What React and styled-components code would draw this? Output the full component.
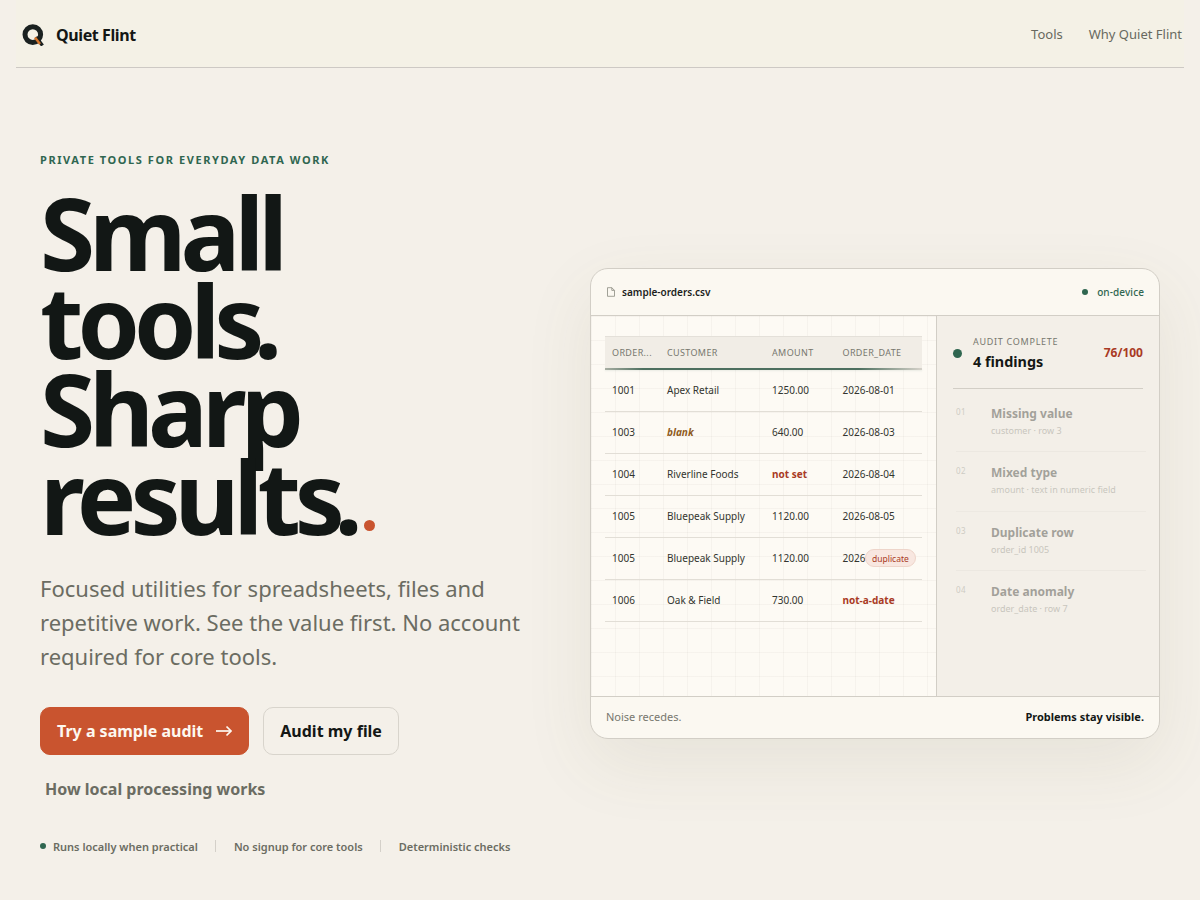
import React from "react";
import styled, { createGlobalStyle } from "styled-components";

const Global = createGlobalStyle`
  html, body { margin: 0; padding: 0; background: #f4f0e9; }
  body { font-family: "Noto Sans", sans-serif; color: #141715; overflow: hidden; }
  * { box-sizing: border-box; }
`;

const Page = styled.div`
  width: 1200px;
  height: 900px;
  overflow: hidden;
  background: #f4f0e9;
`;

const Header = styled.header`
  height: 68px;
  margin: 0 16px;
  padding: 0 2px 0 6px;
  display: flex;
  align-items: center;
  justify-content: space-between;
  border-bottom: 1px solid #cdc9c4;
  background: #f4f1e6;
`;

const Brand = styled.div`
  display: flex;
  align-items: center;
  gap: 12px;
  padding-top: 2px;
  font-size: 16px;
  font-weight: 700;
  letter-spacing: -0.025em;
`;

const Nav = styled.nav`
  display: flex;
  gap: 26px;
  font-size: 13px;
  color: #68695f;
`;

const Hero = styled.main`
  display: flex;
  justify-content: space-between;
  align-items: center;
  padding: 84px 40px 0;
`;

const Left = styled.section`
  width: 500px;
  flex: none;
`;

const Eyebrow = styled.div`
  font-size: 11px;
  line-height: 16px;
  font-weight: 700;
  letter-spacing: 0.143em;
  color: #2f6650;
`;

const Title = styled.h1`
  margin: 20px 0 0;
  font-size: 100px;
  line-height: 88px;
  font-weight: 700;
  letter-spacing: -0.06em;
  color: #121715;
`;

const TitleLine = styled.span`
  display: block;
`;

const Period = styled.span`
  margin-left: -4.5px;
`;

const AccentDot = styled.span`
  display: inline-block;
  width: 11px;
  height: 11px;
  margin-left: 7px;
  vertical-align: 4px;
  border-radius: 50%;
  background: #c9542f;
`;

const Lead = styled.p`
  margin: 31px 0 0;
  width: 490px;
  font-size: 22px;
  line-height: 34.1px;
  color: #6b6c62;
`;

const Actions = styled.div`
  display: flex;
  gap: 14px;
  margin-top: 34px;
`;

const Button = styled.div`
  height: 48px;
  display: flex;
  align-items: center;
  gap: 13px;
  padding: 0 16px;
  border-radius: 10px;
  font-size: 16px;
  font-weight: 700;
  background: ${(p) => (p.$primary ? "#c9542f" : "transparent")};
  color: ${(p) => (p.$primary ? "#fdf8f0" : "#141715")};
  border: 1px solid ${(p) => (p.$primary ? "#c9542f" : "#d8d4cc")};
`;

const TextLink = styled.div`
  margin: 22px 0 0 5px;
  font-size: 16px;
  line-height: 24px;
  font-weight: 700;
  color: #6b6c62;
`;

const Trust = styled.ul`
  list-style: none;
  margin: 39px 0 0;
  padding: 0;
  display: flex;
  align-items: center;
  font-size: 11px;
  font-weight: 600;
  color: #6b6c62;
`;

const TrustItem = styled.li`
  display: flex;
  align-items: center;
  height: 12px;
  padding: 0 17px 0 ${(p) => (p.$first ? "0" : "18px")};
  border-right: ${(p) => (p.$last ? "none" : "1px solid #d4d0c9")};
`;

const Dot = styled.span`
  display: block;
  flex: none;
  width: ${(p) => p.$size || 6}px;
  height: ${(p) => p.$size || 6}px;
  margin-right: ${(p) => p.$gap ?? 7}px;
  border-radius: 50%;
  background: #2f6650;
`;

const Card = styled.section`
  width: 570px;
  height: 471px;
  margin-top: 2px;
  flex: none;
  display: flex;
  flex-direction: column;
  background: #fbf8f1;
  border: 1px solid #d2cec6;
  border-radius: 18px;
  overflow: hidden;
  box-shadow: 0 24px 70px rgba(100, 95, 60, 0.09);
`;

const CardTop = styled.div`
  height: 47px;
  flex: none;
  display: flex;
  align-items: center;
  justify-content: space-between;
  padding: 0 15px;
  border-bottom: 1px solid #d2cec6;
  font-size: 10px;
`;

const FileName = styled.div`
  display: flex;
  align-items: center;
  gap: 6px;
  font-weight: 600;
  color: #1c1e1c;
`;

const Status = styled.div`
  display: flex;
  align-items: center;
  font-weight: 500;
  letter-spacing: 0.01em;
  color: #2f6650;
`;

const CardBody = styled.div`
  flex: 1;
  min-height: 0;
  display: grid;
  grid-template-columns: 346px 1fr;
`;

const TablePane = styled.div`
  padding: 20px 14px 0;
  border-right: 1px solid #d2cec6;
  background-color: #fdfaf4;
  background-image:
    linear-gradient(rgba(120, 110, 90, 0.05) 1px, transparent 1px),
    linear-gradient(90deg, rgba(120, 110, 90, 0.05) 1px, transparent 1px);
  background-size: 24px 24px;
`;

const Row = styled.div`
  display: grid;
  grid-template-columns: 55px 105px 70.5px 1fr;
  align-items: center;
  height: 42px;
  padding-left: 7px;
  font-size: 10px;
  color: #33352f;
  border-bottom: 1px solid #e2ded6;
`;

const HeadRow = styled(Row)`
  position: relative;
  height: 34px;
  padding-bottom: 2px;
  font-size: 9px;
  letter-spacing: 0.04em;
  color: #77776e;
  background: #f1ede6;
  border-top: 1px solid #e4e0d9;
  border-bottom: none;

  &::after {
    content: "";
    position: absolute;
    left: 0;
    right: 0;
    bottom: 0;
    height: 1.5px;
    background: linear-gradient(90deg, #a8aea3, #4d6f5f 12%, #4d6f5f 80%, #d6d2ca);
    box-shadow: 0 1px 2px rgba(47, 102, 80, 0.1);
  }
`;

const Cell = styled.div`
  position: relative;
  white-space: nowrap;
  font-weight: ${(p) => (p.$flag ? 700 : 400)};
  font-style: ${(p) => (p.$amber ? "italic" : "normal")};
  color: ${(p) => (p.$amber ? "#8f5b1d" : p.$flag ? "#a93a24" : "inherit")};
`;

const Badge = styled.span`
  position: absolute;
  left: 22.5px;
  top: -2px;
  height: 18px;
  padding: 0 6px;
  display: flex;
  align-items: center;
  border: 1px solid #eed5ca;
  border-radius: 9px;
  background: #f8e7e0;
  color: #a93a24;
  font-size: 8.5px;
`;

const Side = styled.aside`
  padding: 20px 13px 0 16px;
  background: #f3efe8;
`;

const Summary = styled.div`
  display: flex;
  align-items: center;
  padding-bottom: 16px;
  border-bottom: 1px solid #d2cec6;
  margin: 0 3px 4px 0;
`;

const SummaryText = styled.div`
  flex: 1;
  padding-left: 1px;
`;

const SummaryLabel = styled.div`
  font-size: 9px;
  line-height: 12px;
  letter-spacing: 0.08em;
  color: #77776e;
`;

const SummaryTitle = styled.div`
  margin-top: 4px;
  font-size: 14.4px;
  line-height: 20px;
  font-weight: 700;
  color: #141715;
`;

const Score = styled.div`
  font-size: 12px;
  font-weight: 700;
  color: #a93a24;
  margin-bottom: 2px;
`;

const Finding = styled.div`
  display: grid;
  grid-template-columns: 35px 1fr;
  margin-left: 3px;
  padding: 12px 0 14.5px;
  border-bottom: 1px solid ${(p) => (p.$last ? "transparent" : "#e4e0d8")};
  opacity: 0.42;
`;

const FindingNum = styled.div`
  font-size: 8px;
  line-height: 14px;
  letter-spacing: 0.06em;
  color: #9a9a90;
`;

const FindingTitle = styled.div`
  font-size: 12px;
  line-height: 17px;
  font-weight: 700;
  color: #33352f;
`;

const FindingMeta = styled.div`
  margin-top: 2px;
  font-size: 9px;
  line-height: 13px;
  color: #8c8c83;
`;

const CardFoot = styled.div`
  height: 42px;
  padding: 0 15px 2px;
  flex: none;
  display: flex;
  align-items: center;
  justify-content: space-between;
  border-top: 1px solid #d2cec6;
  font-size: 11px;
  color: #77776e;
`;

const FootStrong = styled.span`
  font-weight: 700;
  color: #141715;
`;

const Logo = () => (
  <svg width="22" height="22" viewBox="0 0 22 22" aria-hidden="true">
    <circle cx="10.8" cy="10.6" r="7.8" fill="none" stroke="#1a2120" strokeWidth="5" />
    <path d="M14 13 L20.5 21.5" stroke="#1a2120" strokeWidth="3.4" />
    <path d="M13 13.5 L18 20" stroke="#d6762c" strokeWidth="2.4" />
  </svg>
);

const ArrowIcon = () => (
  <svg width="16" height="12" viewBox="0 0 16 12" fill="none" stroke="#fdf8f0" strokeWidth="1.7" aria-hidden="true">
    <path d="M0 6 H15" />
    <path d="M10.5 1.5 L15 6 L10.5 10.5" />
  </svg>
);

const FileIcon = () => (
  <svg width="10" height="10" viewBox="0 0 10 10" fill="none" stroke="#8a8a80" strokeWidth="0.8" aria-hidden="true">
    <path d="M1.5 .7 H5.8 L8.5 3.4 V9.3 H1.5 Z" />
    <path d="M5.8 .7 V3.4 H8.5" />
  </svg>
);

const rows = [
  ["1001", "Apex Retail", "1250.00", "2026-08-01"],
  ["1003", <Cell $flag $amber>blank</Cell>, "640.00", "2026-08-03"],
  ["1004", "Riverline Foods", <Cell $flag>not set</Cell>, "2026-08-04"],
  ["1005", "Bluepeak Supply", "1120.00", "2026-08-05"],
  ["1005", "Bluepeak Supply", "1120.00", <Cell>2026<Badge>duplicate</Badge></Cell>],
  ["1006", "Oak & Field", "730.00", <Cell $flag>not-a-date</Cell>],
];

const findings = [
  ["01", "Missing value", "customer · row 3"],
  ["02", "Mixed type", "amount · text in numeric field"],
  ["03", "Duplicate row", "order_id 1005"],
  ["04", "Date anomaly", "order_date · row 7"],
];

export default function App() {
  return (
    <Page>
      <Global />
      <Header>
        <Brand><Logo />Quiet Flint</Brand>
        <Nav><span>Tools</span><span>Why Quiet Flint</span></Nav>
      </Header>
      <Hero>
        <Left>
          <Eyebrow>PRIVATE TOOLS FOR EVERYDAY DATA WORK</Eyebrow>
          <Title>
            <TitleLine>Small</TitleLine>
            <TitleLine>tools<Period>.</Period></TitleLine>
            <TitleLine>Sharp</TitleLine>
            <TitleLine>results<Period>.</Period><AccentDot /></TitleLine>
          </Title>
          <Lead>Focused utilities for spreadsheets, files and repetitive work. See the value first. No account required for core tools.</Lead>
          <Actions>
            <Button $primary>Try a sample audit <ArrowIcon /></Button>
            <Button>Audit my file</Button>
          </Actions>
          <TextLink>How local processing works</TextLink>
          <Trust>
            <TrustItem $first><Dot />Runs locally when practical</TrustItem>
            <TrustItem>No signup for core tools</TrustItem>
            <TrustItem $last>Deterministic checks</TrustItem>
          </Trust>
        </Left>
        <Card>
          <CardTop>
            <FileName><FileIcon />sample-orders.csv</FileName>
            <Status><Dot $gap={9} />on-device</Status>
          </CardTop>
          <CardBody>
            <TablePane>
              <HeadRow>
                <Cell>ORDER...</Cell><Cell>CUSTOMER</Cell><Cell>AMOUNT</Cell><Cell>ORDER_DATE</Cell>
              </HeadRow>
              {rows.map((r, i) => (
                <Row key={i}>{r.map((c, j) => <Cell key={j}>{c}</Cell>)}</Row>
              ))}
            </TablePane>
            <Side>
              <Summary>
                <Dot $size={9} $gap={10} />
                <SummaryText>
                  <SummaryLabel>AUDIT COMPLETE</SummaryLabel>
                  <SummaryTitle>4 findings</SummaryTitle>
                </SummaryText>
                <Score>76/100</Score>
              </Summary>
              {findings.map((f, i) => (
                <Finding key={f[0]} $last={i === 3}>
                  <FindingNum>{f[0]}</FindingNum>
                  <div>
                    <FindingTitle>{f[1]}</FindingTitle>
                    <FindingMeta>{f[2]}</FindingMeta>
                  </div>
                </Finding>
              ))}
            </Side>
          </CardBody>
          <CardFoot>
            <span>Noise recedes.</span>
            <FootStrong>Problems stay visible.</FootStrong>
          </CardFoot>
        </Card>
      </Hero>
    </Page>
  );
}
